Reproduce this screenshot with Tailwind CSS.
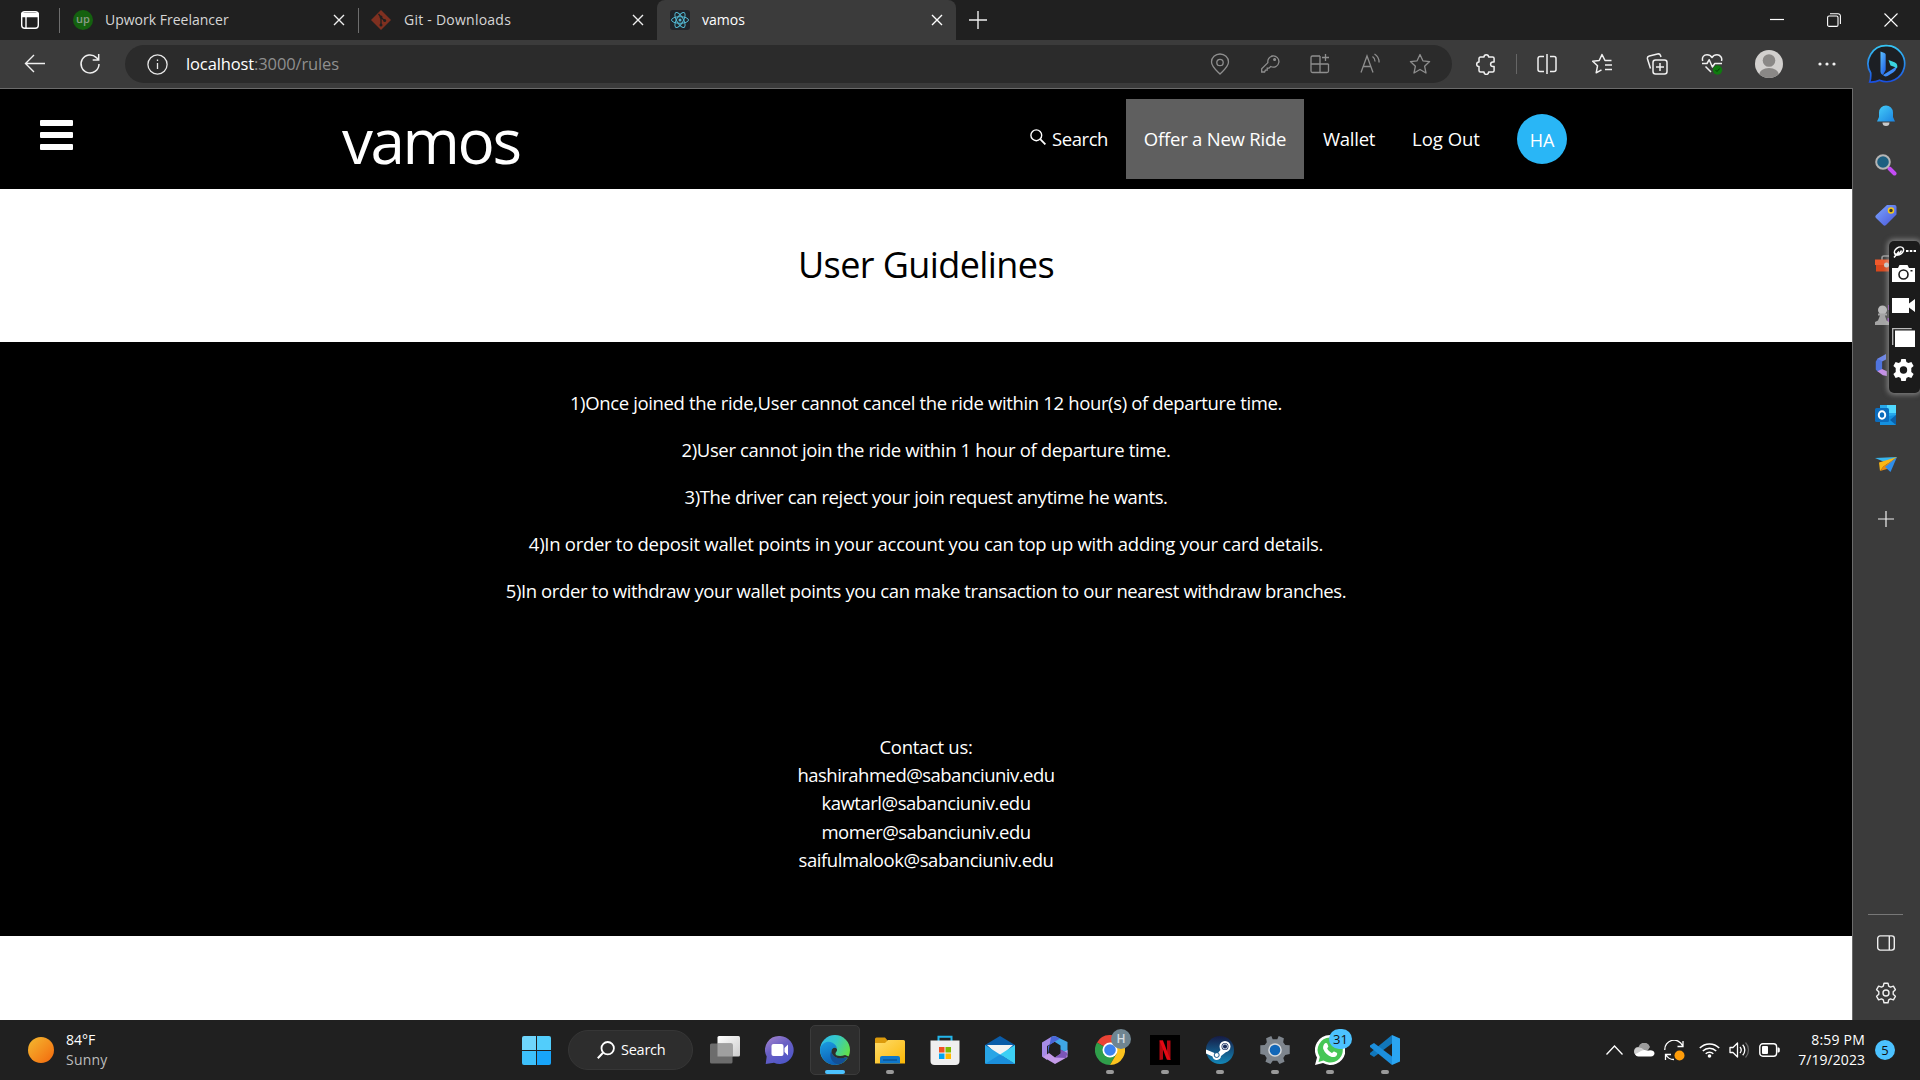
<!DOCTYPE html>
<html lang="en">
<head>
<meta charset="utf-8">
<title>vamos</title>
<script src="https://cdn.jsdelivr.net/npm/@tailwindcss/browser@4"></script>
</head>
<body class="w-[1920px] h-[1080px] overflow-hidden bg-white font-['Open_Sans',sans-serif] whitespace-nowrap flex flex-col relative">

<!-- Tab strip -->
<header class="h-10 bg-[#202020] flex items-center text-[14px] text-[#d6d6d6] shrink-0">
  <div class="w-[59px] flex justify-center"><svg class="w-5 h-5" viewBox="0 0 20 20" fill="none" stroke="#fff" stroke-width="1.4"><rect x="1.7" y="1.7" width="16.6" height="16.6" rx="3"/><path d="M2 3.5h16v3H2z" fill="#fff"/><path d="M6 6v12"/></svg></div>
  <div class="w-px h-[25px] bg-[#6e6e6e]"></div>
  <div class="w-[298px] flex items-center pl-[13px] pr-[13px]">
    <span class="size-5 rounded-full bg-[#14610f] text-[#8a9a88] text-[11px] font-semibold leading-[17px] text-center">up</span>
    <span class="ml-3 mb-[2px]">Upwork Freelancer</span>
    <svg class="ml-auto size-3" viewBox="0 0 12 12" stroke="#eee" stroke-width="1.4"><path d="M1 1l10 10M11 1L1 11"/></svg>
  </div>
  <div class="w-px h-[25px] bg-[#6e6e6e]"></div>
  <div class="w-[298px] flex items-center pl-[12px] pr-[13px]">
    <svg class="size-5" viewBox="0 0 20 20"><path d="M10 0l10 10-10 10L0 10z" fill="#7f3020"/><path d="M7.5 4l2.500 3v8M10 7.500l3.500 3" stroke="#202020" stroke-width="1.300" fill="none"/><circle cx="10" cy="15" r="1.500" fill="#202020"/><circle cx="10" cy="7" r="1.500" fill="#202020"/><circle cx="13.700" cy="10.500" r="1.500" fill="#202020"/></svg>
    <span class="ml-[13px] mb-[2px] tracking-[0.24px]">Git - Downloads</span>
    <svg class="ml-auto size-3" viewBox="0 0 12 12" stroke="#eee" stroke-width="1.4"><path d="M1 1l10 10M11 1L1 11"/></svg>
  </div>
  <div class="w-[299px] h-10 bg-[#3b3b3b] rounded-t-lg flex items-center pl-[13px] pr-[13px] text-white">
    <svg class="size-5" viewBox="0 0 20 20" fill="none" stroke="#53b8d4" stroke-width="1"><rect width="20" height="20" rx="3" fill="#20232a" stroke="none"/><ellipse cx="10" cy="10" rx="8.5" ry="3.3"/><ellipse cx="10" cy="10" rx="8.5" ry="3.3" transform="rotate(60 10 10)"/><ellipse cx="10" cy="10" rx="8.5" ry="3.3" transform="rotate(120 10 10)"/><circle cx="10" cy="10" r="1.5" fill="#53b8d4" stroke="none"/></svg>
    <span class="ml-3 mb-[2px]">vamos</span>
    <svg class="ml-auto size-3" viewBox="0 0 12 12" stroke="#fff" stroke-width="1.4"><path d="M1 1l10 10M11 1L1 11"/></svg>
  </div>
  <svg class="ml-[13px] size-[18px]" viewBox="0 0 18 18" stroke="#eee" stroke-width="1.4"><path d="M9 0v18M0 9h18"/></svg>
  <div class="ml-auto flex items-center pr-[22px]">
    <svg class="w-[14px] h-[14px]" viewBox="0 0 14 14" stroke="#fff" stroke-width="1.2"><path d="M0 6.500h14"/></svg>
    <svg class="ml-[43px] w-[14px] h-[14px]" viewBox="0 0 14 14" fill="none" stroke="#fff" stroke-width="1.100"><rect x=".6" y="3" width="10.400" height="10.400" rx="1.500"/><path d="M3 .7h8a2.400 2.400 0 0 1 2.400 2.400v8"/></svg>
    <svg class="ml-[43px] w-[14px] h-[14px]" viewBox="0 0 14 14" stroke="#fff" stroke-width="1.100"><path d="M.5 .5l13 13M13.500 .5l-13 13"/></svg>
  </div>
</header>

<!-- Toolbar -->
<div class="h-12 bg-[#3b3b3b] flex items-center shrink-0">
  <svg class="ml-[24px] size-[22px]" viewBox="0 0 22 22" fill="none" stroke="#f0f0f0" stroke-width="1.400"><path d="M21 10.500H1.500M10 2L1.500 10.500 10 19"/></svg>
  <svg class="ml-[33px] size-[22px]" viewBox="0 0 22 22" fill="none" stroke="#f0f0f0" stroke-width="1.500"><path d="M20 11a9 9 0 1 1-2.600-6.400L19.500 6.500M19.700 1v6h-6"/></svg>
  <div class="ml-[24px] w-[1327px] h-[38px] rounded-full bg-[#2b2b2b] flex items-center pl-[22px] pr-[21px]">
    <svg class="size-[21px]" viewBox="0 0 21 21" fill="none" stroke="#e8e8e8" stroke-width="1.300"><circle cx="10.500" cy="10.500" r="9.600"/><path d="M10.500 9v6M10.500 5.500v1.600"/></svg>
    <span class="ml-[18px] text-[16.5px] tracking-[-0.12px] text-[#8f8f8f]"><span class="text-white">localhost</span>:3000/rules</span>
    <div class="ml-auto flex items-center gap-[28px] text-[#8e8e8e]">
      <svg class="size-[22px]" viewBox="0 0 22 22" fill="none" stroke="currentColor" stroke-width="1.300"><path d="M11 21C7 17 2.500 13.500 2.500 9a8.500 8 0 0 1 17 0c0 4.500-4.500 8-8.500 12z"/><circle cx="11" cy="9.500" r="3.200"/></svg>
      <svg class="size-[22px]" viewBox="0 0 22 22" fill="none" stroke="currentColor" stroke-width="1.300"><path d="M13.500 3a5.600 5.600 0 1 1-1.800 10.500L10 15.200H8.200v2H6.400L5.600 19H2.700v-3.200l6.200-6.200A5.600 5.600 0 0 1 13.500 3z"/><circle cx="15.600" cy="6.500" r=".9" fill="currentColor"/></svg>
      <svg class="size-[22px]" viewBox="0 0 22 22" fill="none" stroke="currentColor" stroke-width="1.300"><path d="M11 3H3.500a1.500 1.500 0 0 0-1.500 1.500V18a1.500 1.500 0 0 0 1.500 1.500H18a1.500 1.500 0 0 0 1.500-1.500v-7M2 11h17.500M11 3v16.500M16.500 1v7M13 4.500h7"/></svg>
      <svg class="size-[22px]" viewBox="0 0 22 22" fill="none" stroke="currentColor" stroke-width="1.300"><path d="M2 19.500L8 3l6 16.500M4.300 13.500h7.400M13.500 3.500c1.800 1.200 2.600 2.800 2.600 5M15.500 1c3 1.800 4.600 4.500 4.600 8.500"/></svg>
      <svg class="size-[22px]" viewBox="0 0 22 22" fill="none" stroke="currentColor" stroke-width="1.300" stroke-linejoin="round"><path d="M11 1.500l2.900 6.300 6.700.8-5 4.600 1.400 6.800-6-3.500-6 3.500 1.400-6.800-5-4.600 6.700-.8z"/></svg>
    </div>
  </div>
  <svg class="ml-[23px] size-[22px]" viewBox="0 0 22 22" fill="none" stroke="#f0f0f0" stroke-width="1.500" stroke-linejoin="round"><path d="M5.500 4H9a2.300 2.300 0 0 1 4.600 0h4a1.500 1.500 0 0 1 1.500 1.500V9h-1.200a2.300 2.300 0 0 0 0 4.600h1.200v4a1.500 1.500 0 0 1-1.500 1.500h-4a2.300 2.300 0 0 1-4.600 0H5.500A1.500 1.500 0 0 1 4 17.600v-4a2.300 2.300 0 0 1 0-4.600V5.500A1.500 1.500 0 0 1 5.500 4z"/></svg>
  <div class="ml-[19px] w-px h-[20px] bg-[#666]"></div>
  <div class="ml-[19px] flex items-center gap-[33px]">
    <svg class="size-[22px]" viewBox="0 0 22 22" fill="none" stroke="#f0f0f0" stroke-width="1.500"><path d="M8 3.500H4A2 2 0 0 0 2 5.500v11a2 2 0 0 0 2 2h4M14 3.500h4a2 2 0 0 1 2 2v11a2 2 0 0 1-2 2h-4M11 1v20"/></svg>
    <svg class="size-[22px]" viewBox="0 0 22 22" fill="none" stroke="#f0f0f0" stroke-width="1.500" stroke-linejoin="round"><path d="M20.500 7.500h-6.500L11 1.500l-2.800 6-6.500.8 4.800 4.500-1.300 7 5.300-3M14 12h7M14 16.500h7"/></svg>
    <svg class="size-[22px]" viewBox="0 0 22 22" fill="none" stroke="#f0f0f0" stroke-width="1.500" stroke-linejoin="round"><rect x="7" y="7" width="14" height="14" rx="2.500"/><path d="M14 10v8M10 14h8M4.500 15.500L1.500 6a2.500 2.500 0 0 1 1.800-3L11.500 1a2.500 2.500 0 0 1 3 1.600L15 4"/></svg>
    <svg class="size-[22px]" viewBox="0 0 22 22" fill="none" stroke="#f0f0f0" stroke-width="1.500" stroke-linejoin="round"><path d="M1.700 8C.6 4 3 1.800 6 1.800c2.200 0 3.900 1 5 2.700 1.100-1.700 2.800-2.700 5-2.700 3.300 0 5.500 3 4.500 6.200M1 10.500h5l2.200-3.800 3.200 7.300 2.400-3.500H21M4.500 13.500L10 19"/><circle cx="16.500" cy="17" r="4.700" fill="#0f7b0f" stroke="none"/><path d="M14.500 17l1.500 1.500 2.700-3" stroke="#063a06" stroke-width="1"/></svg>
  </div>
  <svg class="ml-[32px] size-[28px]" viewBox="0 0 28 28"><clipPath id="av"><circle cx="14" cy="14" r="14"/></clipPath><g clip-path="url(#av)"><rect width="28" height="28" fill="#d2d0ce"/><circle cx="14" cy="10.500" r="6.300" fill="#8a8886"/><ellipse cx="14" cy="25" rx="10" ry="7" fill="#8a8886"/></g></svg>
  <svg class="ml-[33px] w-[22px] h-[6px]" viewBox="0 0 22 6" fill="#f0f0f0"><circle cx="4" cy="3" r="1.600"/><circle cx="11" cy="3" r="1.600"/><circle cx="18" cy="3" r="1.600"/></svg>
  <svg class="ml-[28px] w-[42px] h-[42px]" viewBox="0 0 42 42"><defs><linearGradient id="bg1" x1="0" y1="0" x2="0" y2="1"><stop offset="0" stop-color="#35c5f4"/><stop offset="1" stop-color="#1a4fe0"/></linearGradient><linearGradient id="bg2" x1="0" y1="0" x2=".6" y2="1"><stop offset="0" stop-color="#5cc0ff"/><stop offset="1" stop-color="#2468e8"/></linearGradient></defs><path d="M21.500 2.700a18 18 0 1 1-8 34.500c-3 1.600-6 2-9.800 1.800 1.400-3.500 1-6 1-9A18 18 0 0 1 21.500 2.700z" fill="#1c1f24" stroke="url(#bg1)" stroke-width="1.700"/><path d="M14.500 8.500l4 1.500c.8.400 1.200 1 1.200 1.800V27l-2.700 5c-2-1-2.500-2-2.500-4z" fill="url(#bg2)"/><path d="M17 32l10.500-6.500c2-1.200 3.500-2.800 3.500-5.500.3 4-.5 7-3.500 9.200L21.500 33c-2 1-3.500.2-4.500-1z" fill="#3f8cf7"/><path d="M22.500 17l6 2.300c2.500 1 3.500 3.500 2.500 6l-3-1.500-3.500-1.300z" fill="#3ad5e0"/></svg>
</div>

<div class="h-[932px] flex shrink-0">
  <!-- Page viewport -->
  <main class="w-[1852px] border-t border-[#6b6b6b] flex flex-col bg-white text-[18.5px] text-white">
    <nav class="h-[100px] bg-black flex items-center shrink-0">
      <div class="ml-[40px] mb-[8px] w-[33px] flex flex-col gap-[6px]">
        <div class="h-[6px] rounded-[1px] bg-white"></div><div class="h-[6px] rounded-[1px] bg-white"></div><div class="h-[6px] rounded-[1px] bg-white"></div>
      </div>
      <div class="ml-[269px] w-[688px] text-[62px] leading-none pt-[2px] tracking-[-2.4px]">vamos</div>
      <svg class="mb-[5px] size-[16px]" viewBox="0 0 16 16" fill="none" stroke="#fff" stroke-width="1.400"><circle cx="6.300" cy="6.300" r="5.400"/><path d="M10.200 10.200l5.200 5.200" stroke-width="1.800"/></svg>
      <span class="ml-[6px] w-[74px] tracking-[-0.43px]">Search</span>
      <div class="w-[178px] h-20 bg-[#5f5f5f] flex items-center justify-center tracking-[-0.22px]">Offer a New Ride</div>
      <span class="ml-[19px] w-[89px] tracking-[-0.25px]">Wallet</span>
      <span class="w-[105px]">Log Out</span>
      <span class="size-[50px] rounded-full bg-[#29b6f6] flex items-center justify-center text-[18px] pt-[2px]">HA</span>
    </nav>
    <h1 class="h-[153px] shrink-0 flex items-center justify-center pb-[1px] text-[36px] text-black tracking-[-0.59px]">User Guidelines</h1>
    <section class="h-[594px] shrink-0 bg-black pt-[47px] text-center">
      <div class="flex flex-col items-center gap-[19px] leading-[28px]">
        <p class="tracking-[-0.36px]">1)Once joined the ride,User cannot cancel the ride within 12 hour(s) of departure time.</p>
        <p class="tracking-[-0.36px]">2)User cannot join the ride within 1 hour of departure time.</p>
        <p class="tracking-[-0.39px]">3)The driver can reject your join request anytime he wants.</p>
        <p class="tracking-[-0.28px]">4)In order to deposit wallet points in your account you can top up with adding your card details.</p>
        <p class="tracking-[-0.4px]">5)In order to withdraw your wallet points you can make transaction to our nearest withdraw branches.</p>
      </div>
      <div class="mt-[128px] leading-[28.2px] flex flex-col items-center">
        <p class="tracking-[-0.3px]">Contact us:</p>
        <p class="tracking-[-0.52px]">hashirahmed@sabanciuniv.edu</p>
        <p class="tracking-[-0.48px]">kawtarl@sabanciuniv.edu</p>
        <p class="tracking-[-0.52px]">momer@sabanciuniv.edu</p>
        <p class="tracking-[-0.42px]">saifulmalook@sabanciuniv.edu</p>
      </div>
    </section>
  </main>

  <!-- Edge sidebar -->
  <aside class="w-[68px] bg-[#3b3b3b] border-l border-[#6b6b6b] pt-[16px] pr-[2px] flex flex-col items-center">
    <svg class="size-[22px]" viewBox="0 0 22 22"><defs><linearGradient id="be" x1="0" y1="0" x2="1" y2="1"><stop offset="0" stop-color="#46d0fa"/><stop offset="1" stop-color="#1a82e0"/></linearGradient></defs><path d="M7.500 18.500h7a3.500 3.500 0 0 1-7 0z" fill="#c9c9c9"/><path d="M11 1.500a7 7 0 0 1 7 7v4.500l2 4.500H2l2-4.500V8.500a7 7 0 0 1 7-7z" fill="url(#be)"/></svg>
    <svg class="mt-[28px] size-[22px]" viewBox="0 0 22 22"><path d="M14.500 14.500l5 5" stroke="#c44cf5" stroke-width="4" stroke-linecap="round"/><circle cx="8" cy="8" r="6.800" fill="#1d5f80" stroke="#b5b5b5" stroke-width="2"/></svg>
    <svg class="mt-[28px] size-[22px]" viewBox="0 0 22 22"><defs><linearGradient id="tg" x1="0" y1="0" x2="1" y2="1"><stop offset="0" stop-color="#7ba6ff"/><stop offset="1" stop-color="#4a55d8"/></linearGradient></defs><path d="M12 1h7.500A2 2 0 0 1 21.500 3v7.500L11 21a2 2 0 0 1-2.800 0L1 14a2 2 0 0 1 0-2.800z" fill="url(#tg)"/><circle cx="16" cy="6.500" r="2.500" fill="#333" stroke="#f5c71a" stroke-width="1.500"/></svg>
    <svg class="mt-[28px] size-[22px]" viewBox="0 0 22 22"><path d="M7 6V4a2 2 0 0 1 2-2h5" stroke="#999" stroke-width="1.600" fill="none"/><path d="M1 9h20v8.500H1z" fill="#d9481c"/><path d="M0 5.500h22V11H0z" fill="#ef5a2c"/><circle cx="11.500" cy="11" r="2.500" fill="#ccc"/></svg>
    <svg class="mt-[28px] size-[22px]" viewBox="0 0 22 22"><path d="M13 1h6v5h-6zM12.500 14h6v6h-6z" fill="#8b3fb0"/><circle cx="7.500" cy="6" r="4.500" fill="#b9b9b9"/><path d="M3 9.500h9v2H10l1.500 5 2.500 1.500v3H0v-3l3-1.500 2-5H3z" fill="#a4a4a4"/></svg>
    <svg class="mt-[28px] size-[22px]" viewBox="0 0 26 28"><path d="M13 0L2 6v16l6-3V9.500L13 7z" fill="#6d86e8"/><path d="M2 6L0 10v10l3 2.500L8 19V9z" fill="#4f74dd"/><path d="M8 19l6 3v6l-5-1L2 22z" fill="#c58fe8"/></svg>
    <svg class="mt-[28px] size-[22px]" viewBox="0 0 22 22"><path d="M5 1h16v19H5z" fill="#28a8ea"/><path d="M12 1h9v8h-9z" fill="#50d9ff"/><path d="M5 13l16-2v10H5z" fill="#1490df"/><path d="M21 11l-6 5 6 5z" fill="#0a5fa8"/><rect x="0" y="4" width="14" height="14" rx="1.500" fill="#0b6cbd"/><ellipse cx="7" cy="11" rx="3.200" ry="3.700" fill="none" stroke="#fff" stroke-width="2"/></svg>
    <svg class="mt-[28px] size-[22px]" viewBox="0 0 22 22"><path d="M0 4l22-1-9 6.500z" fill="#38b6ee"/><path d="M22 3L4 8.500 5 17l3.500-4.500z" fill="#fbb713"/><path d="M22 3L8.500 12.500 5 17l7-2z" fill="#e8890c"/><path d="M22 3l-6.500 15-5.500-5z" fill="#2f8eea"/></svg>
    <svg class="mt-[35px] size-[16px]" viewBox="0 0 16 16" stroke="#eee" stroke-width="1.200"><path d="M8 0v16M0 8h16"/></svg>
    <div class="mt-auto w-[35px] h-px bg-[#777]"></div>
    <svg class="mt-[20px] w-[18px] h-[16px]" viewBox="0 0 18 16" fill="none" stroke="#eee" stroke-width="1.400"><rect x=".7" y=".9" width="16.600" height="14.200" rx="2.500"/><path d="M12.300 1v14"/></svg>
    <svg class="mt-[31px] mb-[16px] size-[22px]" viewBox="0 0 22 22" fill="none" stroke="#f0f0f0" stroke-width="1.400" stroke-linejoin="round"><path d="M9 1.200h4l.7 2.900 1.800 1 2.900-.9 2 3.500-2.200 2v2.600l2.200 2-2 3.500-2.900-.9-1.800 1-.7 2.900H9l-.7-2.900-1.800-1-2.900.9-2-3.500 2.200-2V9.700l-2.200-2 2-3.500 2.900.9 1.800-1z"/><circle cx="11" cy="11" r="3"/></svg>
  </aside>
</div>

<!-- Floating capture toolbar -->
<div class="absolute left-[1889px] top-[241px] w-[31px] h-[152px] rounded-[5px] bg-[#1b1b1b] shadow-[0_0_5px_2px_rgba(190,190,190,0.5)] flex flex-col items-start pl-[3px]">
  <svg class="mt-[5px] w-[25px] h-[12px]" viewBox="0 0 25 12" fill="none" stroke="#fff" stroke-width="1.600"><ellipse cx="7" cy="5" rx="5" ry="3.500" transform="rotate(-35 7 5)"/><path d="M2.500 7.500c2 2 5 1.500 7-3M2 11.500l5-6"/><path d="M14 5h10" stroke-width="2.200" stroke-dasharray="2.500 1.300"/></svg>
  <svg class="mt-[7px] w-[23px] h-[17px]" viewBox="0 0 23 17"><path d="M0 3h6l1.500-3h8L17 3h6v14H0z" fill="#fff"/><circle cx="11.500" cy="9.500" r="4.500" fill="none" stroke="#1b1b1b" stroke-width="1.600"/><rect x="18.500" y="5" width="2" height="1.500" fill="#1b1b1b"/></svg>
  <svg class="mt-[16px] w-[23px] h-[15px]" viewBox="0 0 23 15" fill="#fff"><path d="M0 0h17v5.500L23 1v13l-6-4.500V15H0z"/></svg>
  <svg class="mt-[15px] w-[23px] h-[19px]" viewBox="0 0 23 19"><path d="M.7 17V.7h19" stroke="#bbb" stroke-width="1.300" fill="none"/><path d="M3 2.500h20V19H3z" fill="#fff"/></svg>
  <svg class="mt-[12px] w-[23px] h-[22px]" viewBox="0 0 22 22"><path fill="#fff" fill-rule="evenodd" d="M8.800 0h4.400l.7 3 2 1.100 3-1 2.200 3.900-2.300 2.100v3.800l2.300 2.100-2.200 3.900-3-1-2 1.100-.7 3H8.800l-.7-3-2-1.100-3 1L.9 15l2.300-2.100V9.100L.9 7l2.200-3.900 3 1 2-1.100zM11 7.300a3.700 3.700 0 1 0 0 7.400 3.700 3.700 0 0 0 0-7.400z"/></svg>
</div>

<!-- Taskbar -->
<footer class="h-[60px] bg-[#202020] flex items-center text-white text-[14px] shrink-0">
  <div class="w-[522px] flex items-center pl-[28px]">
    <div class="size-[26px] rounded-full bg-linear-to-br from-[#f2b92f] to-[#f2650a]"></div>
    <div class="ml-3 leading-[20px]"><div>84°F</div><div class="text-[#bdbdbd] tracking-[0.2px]">Sunny</div></div>
  </div>
  <div class="grid grid-cols-2 gap-[1px] size-[29px]"><i class="bg-[#6fd5fb] rounded-tl-[2px]"></i><i class="bg-[#52cdfb] rounded-tr-[2px]"></i><i class="bg-[#3dc0fb] rounded-bl-[2px]"></i><i class="bg-[#18a4f9] rounded-br-[2px]"></i></div>
  <div class="ml-[17px] w-[125px] h-10 rounded-full bg-[#2d2d2d] border border-[#363636] flex items-center pl-[28px]">
    <svg class="size-[18px]" viewBox="0 0 18 18" fill="none" stroke="#fff" stroke-width="1.800"><circle cx="10.700" cy="7.200" r="6.200"/><path d="M6 11.800L.8 17.200" stroke-width="2"/></svg>
    <span class="ml-[6px] text-[14.5px] tracking-[-0.25px]">Search</span>
  </div>
  <div class="ml-[4px] grid grid-cols-[repeat(13,55px)] h-[60px]">
    <div class="flex items-center justify-center"><svg class="size-[30px]" viewBox="0 0 30 30"><defs><linearGradient id="tv" x1="0" y1="0" x2="1" y2="1"><stop offset="0" stop-color="#fff"/><stop offset="1" stop-color="#ccc"/></linearGradient></defs><rect x="7.500" y="1" width="22.500" height="20.500" rx="1.500" fill="url(#tv)"/><rect x="0" y="8.500" width="22.500" height="20" rx="1.500" fill="#6c6c6c"/><rect x="7.500" y="8.500" width="15" height="13" fill="#a0a0a0"/></svg></div>
    <div class="flex items-center justify-center"><svg class="size-[30px]" viewBox="0 0 30 30"><defs><linearGradient id="ct" x1="0" y1="0" x2=".6" y2="1"><stop offset="0" stop-color="#a988cf"/><stop offset=".5" stop-color="#6a5fc4"/><stop offset="1" stop-color="#4f57c8"/></linearGradient></defs><path d="M15 1a14 14 0 1 1-6 26.800L.7 29l1-7.500A14 14 0 0 1 15 1z" fill="url(#ct)"/><rect x="6.500" y="9" width="12" height="12" rx="2" fill="#fff"/><path d="M19.500 13l3.500-3.500v11L19.500 17z" fill="#fff"/></svg></div>
    <div class="flex items-center justify-center relative"><div class="size-[50px] rounded-[5px] bg-[#2d2d2d] border border-[#3b3b3b] flex items-center justify-center"><svg class="size-[30px]" viewBox="0 0 30 30"><defs><linearGradient id="e1" x1="0" y1="0" x2="1" y2=".5"><stop offset="0" stop-color="#2db9ee"/><stop offset=".5" stop-color="#35c8c8"/><stop offset="1" stop-color="#62e04a"/></linearGradient><linearGradient id="e2" x1="0" y1="0" x2=".4" y2="1"><stop offset="0" stop-color="#1b9de2"/><stop offset="1" stop-color="#0c5fb4"/></linearGradient></defs><circle cx="15" cy="15" r="15" fill="url(#e1)"/><path d="M.2 13C3 6.500 9 6 12 7.500c4 1.800 5 5 4.800 6.200-1.600-2.200-5.600-.5-5.300 3 .4 4.500 6 8.500 16 5.300C25 27 20 30 15 30 6 30-.8 22 .2 13z" fill="url(#e2)"/><path d="M11.500 16c-3 5 0 12 7 13.500 4-.8 7.500-3.500 9.200-7.500-10 3.500-16-.5-16.200-6z" fill="#134f95"/><path d="M16.800 13.700c1 2.500-1.300 3.300-1.300 5 0 2 4.500 3.300 9.500 1.300L30 22l-1.500 1.500-2-1.500c-8 3.500-15-.5-15-6 0-3 3.500-4.500 5.300-2.300z" fill="#2d2d2d"/></svg></div><div class="absolute bottom-[6px] w-5 h-1 rounded-full bg-[#4cc2ff]"></div></div>
    <div class="flex items-center justify-center relative"><svg class="size-[30px]" viewBox="0 0 30 30"><defs><linearGradient id="fo" x1="0" y1="0" x2="1" y2="1"><stop offset="0" stop-color="#ffdc6b"/><stop offset="1" stop-color="#fbb705"/></linearGradient></defs><path d="M0 4a1.500 1.500 0 0 1 1.500-1.500H10L13 6v4H0z" fill="#dc9a0b"/><path d="M0 8h10l3-3h15.500A1.500 1.500 0 0 1 30 6.500v22H0z" fill="url(#fo)"/><path d="M5 28.500V23a2 2 0 0 1 2-2h16a2 2 0 0 1 2 2v5.500z" fill="#0f78cc"/><path d="M8 25h14" stroke="#0a4d8c" stroke-width="1.200"/></svg><div class="absolute bottom-[6px] w-2 h-1 rounded-full bg-[#9a9a9a]"></div></div>
    <div class="flex items-center justify-center"><svg class="size-[30px]" viewBox="0 0 30 30"><path d="M8.500 7V1.800h13V7" fill="none" stroke="#23b5ea" stroke-width="2"/><path d="M.5 5.500h29V26a4 4 0 0 1-4 4h-21a4 4 0 0 1-4-4z" fill="#efefef"/><path d="M9 12h5.500v5.500H9z" fill="#f25022"/><path d="M15.500 12H21v5.500h-5.500z" fill="#7fba00"/><path d="M9 18.500h5.500V24H9z" fill="#00a4ef"/><path d="M15.500 18.500H21V24h-5.500z" fill="#ffb900"/></svg></div>
    <div class="flex items-center justify-center"><svg class="size-[30px]" viewBox="0 0 30 30"><path d="M0 10l15-9 15 9v10H0z" fill="#0a5ca8"/><path d="M2 10h26l-13 12z" fill="#f3f3f3"/><path d="M0 10l15 9.500L30 29H1.500A1.500 1.500 0 0 1 0 27.500z" fill="#28a5e6"/><path d="M30 10L15 19.500 30 29z" fill="#3cd0f5"/><path d="M0 29l15-9.500L30 29z" fill="#1b8fdc"/></svg></div>
    <div class="flex items-center justify-center"><svg class="size-[30px]" viewBox="0 0 30 30"><path d="M11 2L2 7.500v14L7 25V11l8-4.500V1z" fill="#a78be8"/><path d="M15 1l12.500 6v12l-7-4.500V10.500L15 7l-4-5z" fill="#3fa6e6"/><path d="M11 2l4-1 5 2.500-5 3L8 11v8l-1 6z" fill="#4a66d8"/><path d="M27.500 15v7L15 29 3 22l6-4 6 4.500 6-4z" fill="#c49be8"/><path d="M20.500 14.500l7 3.500-1.500 5-11-.5 5.500-4z" fill="#7c55b8"/></svg></div>
    <div class="flex items-center justify-center relative"><svg class="size-[30px]" viewBox="0 0 30 30"><path d="M2 7.500A15 15 0 0 1 28 7.500L15 15z" fill="#ea4335"/><path d="M2 7.500A15 15 0 0 0 15 30l6.500-11.200L15 15z" fill="#2f9e4a"/><path d="M28 7.500A15 15 0 0 1 15 30l6.500-11.200L15 7.500z" fill="#fcc31e"/><circle cx="15" cy="15" r="7.500" fill="#fff"/><circle cx="15" cy="15" r="5.800" fill="#3b82f0"/></svg><div class="absolute left-[29px] top-[9px] size-5 rounded-full bg-[#6f8591] text-[12px] leading-5 text-center font-semibold text-[#d5dce0]">H</div><div class="absolute bottom-[6px] w-2 h-1 rounded-full bg-[#9a9a9a]"></div></div>
    <div class="flex items-center justify-center relative"><svg class="size-[30px]" viewBox="0 0 30 30"><path d="M0 0h30v30H0z" fill="#000"/><path d="M9.500 5.500H13v19l-3.500.5zM17 5.500h3.500V25l-3.500-.5z" fill="#b20710"/><path d="M9.500 5.500H13L20.500 25l-3.700-.5z" fill="#e50914"/></svg><div class="absolute bottom-[6px] w-2 h-1 rounded-full bg-[#9a9a9a]"></div></div>
    <div class="flex items-center justify-center relative"><svg class="size-[30px]" viewBox="0 0 30 30"><defs><linearGradient id="st" x1="0" y1="0" x2="0" y2="1"><stop offset="0" stop-color="#161b45"/><stop offset="1" stop-color="#1387b8"/></linearGradient></defs><circle cx="15" cy="15" r="14" fill="url(#st)"/><path d="M1 14.500l9 3.700 3-.2 4-5 6 2.500-7 5.500a4.300 4.300 0 0 1-8.500.5L1 18.500z" fill="#fff"/><circle cx="20" cy="11.500" r="4.500" fill="#1a2d5c" stroke="#fff" stroke-width="2"/><circle cx="20" cy="11.500" r="2.500" fill="none" stroke="#cfd8e6" stroke-width="1"/><circle cx="11.700" cy="20" r="2.500" fill="none" stroke="#1d5c8c" stroke-width="1"/></svg><div class="absolute bottom-[6px] w-2 h-1 rounded-full bg-[#9a9a9a]"></div></div>
    <div class="flex items-center justify-center relative"><svg class="size-[30px]" viewBox="0 0 22 22"><path fill="#7e858d" d="M8.300.8l1 2.400h3.400l1-2.400 3.800 1.600-.5 3 1.500 1.900 3.300.2v6.500l-3.300.6-1.400 2.200.9 2.800-3.700 1.600-1.700-2.400H9.400l-1.700 2.400L4 19.600l.9-2.800-1.400-2.200L.2 14V7.500l3.300-.2L5 5.400l-.5-3z"/><circle cx="11" cy="11" r="5" fill="#d6d9dc"/><circle cx="11" cy="11" r="3.900" fill="#1267b8"/></svg><div class="absolute bottom-[6px] w-2 h-1 rounded-full bg-[#9a9a9a]"></div></div>
    <div class="flex items-center justify-center relative"><svg class="size-[30px]" viewBox="0 0 30 30"><path d="M15 0a15 15 0 1 1-7 28L0 30l2-7.500A15 15 0 0 1 15 0z" fill="#fff"/><path d="M15 2.500A12.500 12.500 0 1 1 8.500 25.500L3.500 27l1.300-5A12.500 12.500 0 0 1 15 2.500z" fill="#46c655"/><path d="M10.500 8c.8-.2 1.500 0 1.800.8l1 2.400c.2.800-1.300 1.900-1.100 2.400 1 2 2.500 3.400 4.600 4.300.6.200 1.600-1.700 2.300-1.400l2.600 1.300c.8.500.5 1.500.1 2.400-.8 1.700-3.400 2.200-5 1.700-4-1.200-6.800-3.800-8.400-7.700-.8-2 .2-5.300 2.100-6.200z" fill="#fff"/></svg><div class="absolute left-[27px] top-[9px] w-[23px] h-[20px] rounded-full bg-[#4cc2ff] text-[13px] leading-[20px] text-center text-[#111]">31</div><div class="absolute bottom-[6px] w-2 h-1 rounded-full bg-[#9a9a9a]"></div></div>
    <div class="flex items-center justify-center relative"><svg class="size-[30px]" viewBox="0 0 30 30"><path d="M22 0v8.500L4 22 0 19.500v-1.500z" fill="#1177bb"/><path d="M22 30v-8.500L4 8 0 10.500V12z" fill="#1c8fdd"/><path d="M22 0l8 3.500v23L22 30z" fill="#2aa5f2"/></svg><div class="absolute bottom-[6px] w-2 h-1 rounded-full bg-[#9a9a9a]"></div></div>
  </div>
  <div class="ml-auto flex items-center pr-[25px]">
    <svg class="w-[17px] h-[10px]" viewBox="0 0 17 10" fill="none" stroke="#fff" stroke-width="1.300"><path d="M.5 9.500l8-8.500 8 8.500"/></svg>
    <svg class="ml-[11px] w-[21px] h-[14px]" viewBox="0 0 21 14"><path d="M4 12a4 4 0 0 1 .5-8A6 6 0 0 1 16 4l-4 6z" fill="#9c9c9c"/><path d="M4.500 13a4 4 0 0 1-.3-8.500c2-.3 4 .6 5.500 2L14 13z" fill="#cfcfcf"/><path d="M4.500 13.500c-2 0-3-1-3.300-2.500 3-1 4.500-2.500 7-3.500 2-1 3-.5 5 .3 3-1.300 7.300-.7 7.300 2.500 0 2-1.500 3.200-3.500 3.200z" fill="#fff"/></svg>
    <svg class="ml-[9px] size-[21px]" viewBox="0 0 21 21" fill="none" stroke="#fff" stroke-width="1.300"><path d="M.8 10A9.300 9.300 0 0 1 18.500 5.500M19 1v5.500h-5.500M10 19.500a9 9 0 0 1-8-4.500M1.500 20v-5.500H7"/><circle cx="15.500" cy="15.500" r="5" fill="#ff9d0a" stroke="none"/></svg>
    <svg class="ml-[14px] w-[21px] h-[16px]" viewBox="0 0 21 16" fill="none" stroke="#fff" stroke-width="1.500"><path d="M.8 6a13.500 13.500 0 0 1 19.400 0M3.800 9a9.400 9.400 0 0 1 13.400 0M6.700 11.800a5.400 5.400 0 0 1 7.600 0"/><circle cx="10.500" cy="14" r="1.800" fill="#fff" stroke="none"/></svg>
    <svg class="ml-[9px] w-[21px] h-[18px]" viewBox="0 0 21 18" fill="none" stroke="#fff" stroke-width="1.300" stroke-linejoin="round"><path d="M1 6.500h3L8.500 2v14L4 11.500H1zM11 6c1.500 1.800 1.500 4.200 0 6M13.700 3.800c2.800 3 2.800 7.400 0 10.400"/><path d="M16.500 1.500c4 4.300 4 10.700 0 15" stroke="#666"/></svg>
    <svg class="ml-[9px] w-[21px] h-[14px]" viewBox="0 0 21 14"><rect x=".8" y=".8" width="16.800" height="12.400" rx="3" fill="none" stroke="#fff" stroke-width="1.400"/><rect x="3" y="3" width="6" height="8" rx="1" fill="#fff"/><path d="M18.500 4.500h.8c.9 0 1.500.7 1.500 1.500v2c0 .8-.6 1.500-1.500 1.500h-.8z" fill="#fff"/></svg>
    <div class="ml-[9px] w-[76px] text-right leading-[20px]"><div class="tracking-[0.2px]">8:59 PM</div><div class="tracking-[0.05px]">7/19/2023</div></div>
    <div class="ml-[10px] size-5 rounded-full bg-[#4cc2ff] text-[#111] text-[13px] leading-[20px] text-center">5</div>
  </div>
</footer>
</body>
</html>
